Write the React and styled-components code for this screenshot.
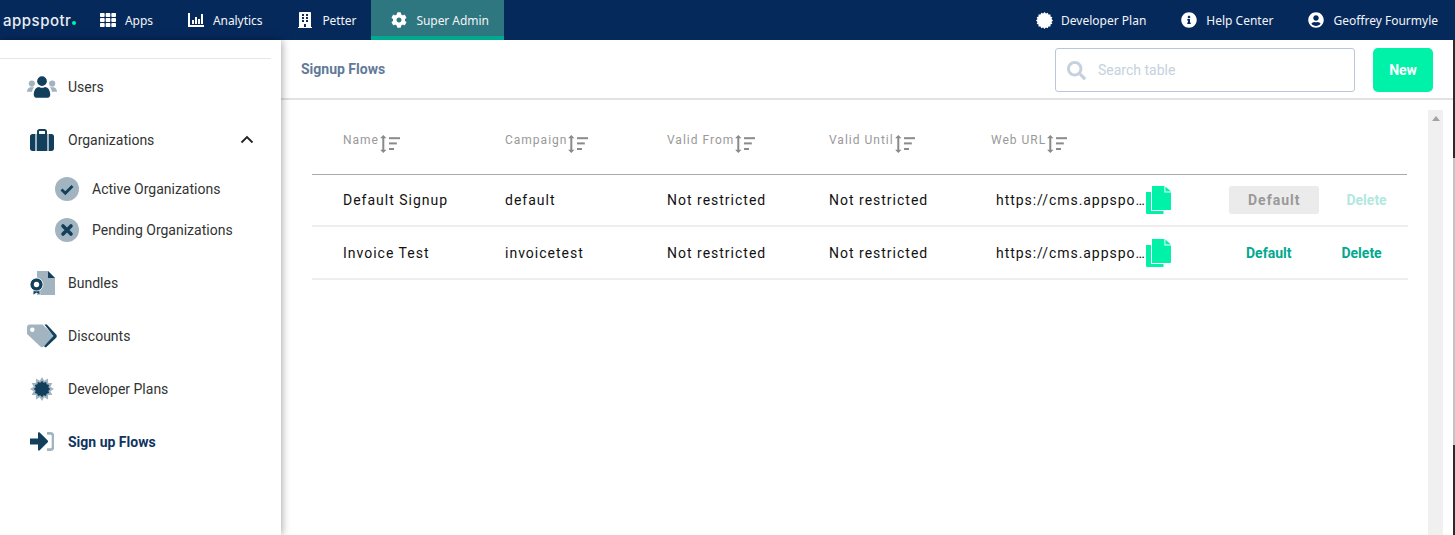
import React from 'react';
import styled, { createGlobalStyle } from 'styled-components';
import { FaTh, FaBuilding, FaCog, FaInfoCircle, FaUserCircle, FaSearch } from 'react-icons/fa';

const DARK = '#123f5c';
const LIGHT = '#a2b4bf';

const Global = createGlobalStyle`
  html, body { margin: 0; padding: 0; height: 100%; background: #fff; overflow: hidden; }
  body { font-family: Roboto, "Liberation Sans", sans-serif; }
  #root { height: 100%; }
  * { box-sizing: border-box; }
`;

const Page = styled.div`
  display: flex;
  flex-direction: column;
  width: 1455px;
  height: 535px;
  overflow: hidden;
`;

const TopBar = styled.header`
  display: flex;
  align-items: stretch;
  height: 40px;
  flex: none;
  background: #06295c;
  color: #fff;
`;

const Logo = styled.div`
  width: 80px;
  padding-left: 3px;
  display: flex;
  align-items: center;
  gap: 1px;
  font-family: Inter, sans-serif;
  font-size: 15px;
  font-weight: 500;
  letter-spacing: 0.5px;
  color: #e9edf3;
`;

const LogoDot = styled.i`
  width: 4px;
  height: 4px;
  margin-top: 5px;
  border-radius: 50%;
  background: #00f2a9;
`;

const NavGroup = styled.div`
  display: flex;
  align-items: stretch;
  letter-spacing: ${p => (p.$tight ? '-0.06px' : '0')};
`;

const NavItem = styled.div`
  display: flex;
  align-items: center;
  padding: 0 15px;
  font-family: "Noto Sans", Roboto, sans-serif;
  font-size: 12px;
  color: #f2f4f7;
  background: ${p => (p.$active ? '#2e7680' : 'transparent')};
  border-bottom: ${p => (p.$active ? '4px solid #00a98f' : '0')};
  padding-top: ${p => (p.$active ? '4px' : '0')};
  &:last-child { padding-right: ${p => (p.$end ? '17px' : '15px')}; }
`;

const NavIcon = styled.span`
  width: 26px;
  margin-right: 4px;
  display: flex;
  justify-content: center;
  align-items: center;
  font-size: 16px;
  color: #fff;
`;

const NavSpacer = styled.div`
  flex: 1;
`;

const Content = styled.div`
  flex: 1;
  display: flex;
  min-height: 0;
`;

const Sidebar = styled.aside`
  width: 281px;
  flex: none;
  padding: 18px 0 0;
  background: #fff;
  box-shadow: 1px 0 8px rgba(0, 0, 0, 0.35);
  position: relative;
  z-index: 1;
`;

const SideList = styled.nav`
  width: 271px;
  padding-top: 1px;
  border-top: 1px solid #e6e6e6;
  display: flex;
  flex-direction: column;
`;

const SideItem = styled.div`
  height: 53px;
  display: flex;
  align-items: center;
  padding-left: 27px;
  font-size: 14px;
  color: ${p => (p.$active ? '#0f3460' : '#333')};
  font-weight: ${p => (p.$active ? 700 : 400)};
`;

const SideIcon = styled.span`
  width: 30px;
  height: 28px;
  margin-right: 11px;
  display: flex;
  align-items: center;
  justify-content: center;
  flex: none;
`;

const Chevron = styled.svg`
  margin-left: auto;
  margin-right: 17px;
`;

const SubList = styled.div`
  display: flex;
  flex-direction: column;
  margin-bottom: 6px;
  margin-top: 2px;
`;

const SubItem = styled.div`
  height: 41px;
  display: flex;
  align-items: center;
  gap: 13px;
  padding-left: 55px;
  font-size: 14px;
  color: #333;
`;

const Main = styled.main`
  flex: 1;
  min-width: 0;
  display: flex;
  flex-direction: column;
`;

const MainHead = styled.div`
  height: 60px;
  flex: none;
  display: flex;
  align-items: center;
  padding: 0 20px;
  border-bottom: 2px solid #e2e2e2;
`;

const Title = styled.h1`
  flex: 1;
  margin: 0;
  font-size: 14px;
  font-weight: 700;
  color: #5f7a99;
`;

const Search = styled.label`
  width: 300px;
  height: 44px;
  display: flex;
  align-items: center;
  gap: 12px;
  padding-left: 11px;
  border: 1px solid #b9c8d9;
  border-radius: 3px;
  color: #c5d1dd;
  font-size: 19px;
  position: relative;
  top: 1px;
`;

const SearchInput = styled.input`
  flex: 1;
  min-width: 0;
  padding: 0;
  border: 0;
  outline: 0;
  background: transparent;
  font: 400 14px Roboto, sans-serif;
  &::placeholder { color: #c5d1dd; opacity: 1; }
`;

const NewButton = styled.button`
  width: 60px;
  height: 44px;
  margin-left: 18px;
  border: 0;
  border-radius: 5px;
  background: #00f2a9;
  color: #fff;
  font: 700 14px Roboto, sans-serif;
  position: relative;
  top: 1px;
`;

const MainBody = styled.div`
  flex: 1;
  min-height: 0;
  display: flex;
`;

const TableArea = styled.div`
  width: 1127px;
  flex: none;
  padding-left: 31px;
`;

const Grid = styled.div`
  display: grid;
  grid-template-columns: 162px 162px 162px 162px 238px 1fr;
  align-items: center;
  padding-left: 31px;
`;

const HeadRow = styled(Grid)`
  height: 75px;
  padding-top: 12px;
  margin-right: 1px;
  border-bottom: 1px solid #aaa;
`;

const BodyRow = styled(Grid)`
  height: ${p => (p.$first ? '52px' : '53px')};
  border-bottom: 2px solid #eee;
  font-size: 14px;
  letter-spacing: 1px;
  color: #111;
`;

const HeadCell = styled.div`
  display: flex;
  align-items: flex-start;
  gap: 1px;
  font-size: 12px;
  letter-spacing: 1px;
  color: #999;
  line-height: 12px;
`;

const UrlCell = styled.div`
  display: flex;
  align-items: center;
  padding-left: 5px;
`;

const UrlText = styled.span`
  width: 150px;
  letter-spacing: 0.95px;
  overflow: hidden;
  text-overflow: ellipsis;
  white-space: nowrap;
`;

const Actions = styled.div`
  display: flex;
  align-items: center;
`;

const DefaultButton = styled.button`
  height: 28px;
  padding: 0 19px;
  margin-left: ${p => (p.disabled ? '0' : '-2px')};
  border: 0;
  border-radius: 3px;
  font: 700 14px Roboto, sans-serif;
  letter-spacing: ${p => (p.disabled ? '1px' : '0')};
  background: ${p => (p.disabled ? '#ebebeb' : 'transparent')};
  color: ${p => (p.disabled ? '#999' : '#00a98f')};
`;

const DeleteButton = styled.button`
  margin-left: ${p => (p.disabled ? '27px' : '31px')};
  padding: 0;
  border: 0;
  background: transparent;
  font: 700 14px Roboto, sans-serif;
  color: ${p => (p.disabled ? '#b2e8df' : '#00a98f')};
`;

const Track = styled.div`
  width: 15px;
  margin: 10px 0 0 20px;
  flex: none;
  background: #f0f0f0;
  display: flex;
  justify-content: center;
  padding-top: 6px;
`;

const TrackArrow = styled.div`
  width: 0;
  height: 0;
  border-left: 4px solid transparent;
  border-right: 4px solid transparent;
  border-bottom: 5px solid #a3a3a3;
`;

const Edge = styled.div`
  width: 2px;
  flex: none;
  display: flex;
  flex-direction: column;
`;

const EdgePart = styled.div`
  flex: ${p => p.$grow} 0 0;
  background: ${p => p.$color};
`;

const burstPoints = (radius, inner, points) => {
  const pts = [];
  for (let i = 0; i < points * 2; i++) {
    const r = (i % 2 ? inner : 1) * radius;
    const a = (Math.PI * i) / points;
    pts.push(`${(12 + r * Math.sin(a)).toFixed(2)},${(12 - r * Math.cos(a)).toFixed(2)}`);
  }
  return pts.join(' ');
};

const PlanIcon = () => (
  <svg width="17" height="17" viewBox="0 0 24 24">
    <polygon points={burstPoints(12, 0.84, 16)} fill="#fff" />
  </svg>
);

const PlansIcon = () => (
  <svg width="24" height="24" viewBox="0 0 24 24">
    <polygon points={burstPoints(12, 0.72, 12)} fill={LIGHT} />
    <polygon points={burstPoints(8.2, 0.8, 12)} fill={DARK} />
  </svg>
);

const AnalyticsIcon = () => (
  <svg width="16" height="14" viewBox="0 0 16 14" fill="#fff">
    <rect x="0" y="0" width="2" height="14" />
    <rect x="0" y="12" width="16" height="2" />
    <rect x="4" y="7" width="2" height="4" />
    <rect x="7" y="4" width="2" height="7" />
    <rect x="10" y="6" width="2" height="5" />
    <rect x="13" y="1" width="2" height="10" />
  </svg>
);

const UsersIcon = () => (
  <svg width="31" height="22" viewBox="0 0 31 22">
    <circle cx="5" cy="7.5" r="3.2" fill={LIGHT} />
    <circle cx="26" cy="7.5" r="3.2" fill={LIGHT} />
    <path d="M0 16c0-3 1.8-4.8 4-4.8h3.5C6 12.6 5.500 14 5.300 16H1.200C.5 16 0 16.200 0 16zM31 16c0-3-1.800-4.800-4-4.800h-3.500c1.500 1.400 2 2.800 2.200 4.800h4.100c.7 0 1.200.2 1.200 0z" fill={LIGHT} />
    <circle cx="15.5" cy="5" r="5" fill={DARK} />
    <path d="M7 19c0-5 2.500-8 5.500-8 1 .6 2 .9 3 .9s2-.3 3-.9c3 0 5.500 3 5.500 8 0 1.800-1 3-2.500 3H9.500C8 22 7 20.800 7 19z" fill={DARK} />
  </svg>
);

const SuitcaseIcon = () => (
  <svg width="24" height="22" viewBox="0 0 24 22">
    <path d="M7 6V2.500C7 1.200 8 0 9.500 0h5C16 0 17 1.200 17 2.500V6h-2V2.500c0-.3-.2-.5-.5-.5h-5c-.3 0-.5.2-.5.500V6z" fill={DARK} />
    <path d="M2.500 5H5v17H2.500C1 22 0 21 0 19.500v-12C0 6 1 5 2.500 5zM7 5h10v17H7zM19 5h2.500C23 5 24 6 24 7.500v12c0 1.500-1 2.500-2.500 2.500H19z" fill={DARK} />
    <path d="M5 5h2v17H5zM17 5h2v17h-2z" fill={LIGHT} />
  </svg>
);

const CheckBadge = () => (
  <svg width="24" height="24" viewBox="0 0 24 24">
    <circle cx="12" cy="12" r="12" fill={LIGHT} />
    <path d="M6.500 12.500l3.800 3.800 7.200-7.300" fill="none" stroke={DARK} strokeWidth="2.800" />
  </svg>
);

const CrossBadge = () => (
  <svg width="24" height="24" viewBox="0 0 24 24">
    <circle cx="12" cy="12" r="12" fill={LIGHT} />
    <path d="M8 8l8 8M16 8l-8 8" fill="none" stroke={DARK} strokeWidth="3.600" strokeLinecap="round" />
  </svg>
);

const BundleIcon = () => (
  <svg width="25" height="24" viewBox="0 0 25 24">
    <path d="M7 0h11l7 7v17H7z" fill={LIGHT} />
    <path d="M18 0l7 7h-7z" fill={DARK} />
    <path d="M3.500 17l-.5 7 3.500-2 3.500 2-.5-7z" fill={DARK} stroke="#fff" strokeWidth="0.600" />
    <circle cx="6.500" cy="13.500" r="6.500" fill={DARK} stroke="#fff" strokeWidth="0.800" />
    <circle cx="6.500" cy="13.500" r="2.700" fill="#fff" />
  </svg>
);

const TagIcon = () => (
  <svg width="31" height="24" viewBox="0 0 31 24">
    <path d="M0 3C0 1.200 1.200 0 3 0h13l10 10c1 1.200 1 2.800 0 4l-8.500 8.700c-1.200 1.200-2.800 1.200-4 0L0 10z" fill={LIGHT} />
    <circle cx="5.500" cy="5.500" r="2.300" fill="#fff" />
    <path d="M18 0h2.500l9.600 10.400c.9 1 .9 2.400 0 3.400L19.500 24l-2-1.500 9.800-10.500z" fill={DARK} />
  </svg>
);

const SignInIcon = () => (
  <svg width="24" height="19" viewBox="0 0 24 19">
    <path d="M17 1.400h3.500C22.300 1.400 23 2.400 23 4v11c0 1.600-.7 2.600-2.500 2.600H17" fill="none" stroke={LIGHT} strokeWidth="2.600" />
    <path d="M0 6.500h8V1.200c0-.9 1-1.400 1.700-.7l8 8c.5.500.5 1.300 0 1.800l-8 8c-.7.700-1.700.2-1.700-.7V12.500H0z" fill={DARK} />
  </svg>
);

const SortIcon = () => (
  <svg width="20" height="18" viewBox="0 0 20 18" fill="#8a8a8a" style={{ marginTop: 1 }}>
    <path d="M3.300 0L6.500 3.200H4.300v11.600h2.200L3.300 18 .1 14.800h2.200V3.200H.1z" />
    <rect x="9" y="2.200" width="11" height="2" />
    <rect x="9" y="7.400" width="7.800" height="2" />
    <rect x="9" y="13" width="5" height="2" />
  </svg>
);

const CopyIcon = () => (
  <svg width="25" height="28" viewBox="0 0 25 28" fill="#00f2a9" style={{ flex: 'none' }}>
    <path d="M0 6h5v19h12.500v3H1.500C.5 28 0 27.500 0 26.500z" />
    <path d="M6 0h12.400v6.600H25V23c0 .6-.4 1-1 1H6z" />
    <path d="M19.400 .4L25 5.600h-5.600z" />
  </svg>
);

const columns = ['Name', 'Campaign', 'Valid From', 'Valid Until', 'Web URL'];

const rows = [
  { name: 'Default Signup', campaign: 'default', current: true },
  { name: 'Invoice Test', campaign: 'invoicetest', current: false },
];

export default function App() {
  return (
    <Page>
      <Global />
      <TopBar>
        <Logo>appspotr<LogoDot /></Logo>
        <NavGroup $tight>
          <NavItem><NavIcon><FaTh /></NavIcon>Apps</NavItem>
          <NavItem><NavIcon><AnalyticsIcon /></NavIcon>Analytics</NavItem>
          <NavItem><NavIcon><FaBuilding /></NavIcon>Petter</NavItem>
          <NavItem $active><NavIcon><FaCog /></NavIcon>Super Admin</NavItem>
        </NavGroup>
        <NavSpacer />
        <NavGroup>
          <NavItem><NavIcon><PlanIcon /></NavIcon>Developer Plan</NavItem>
          <NavItem><NavIcon><FaInfoCircle /></NavIcon>Help Center</NavItem>
          <NavItem $end><NavIcon><FaUserCircle /></NavIcon>Geoffrey Fourmyle</NavItem>
        </NavGroup>
      </TopBar>
      <Content>
        <Sidebar>
          <SideList>
            <SideItem><SideIcon><UsersIcon /></SideIcon>Users</SideItem>
            <SideItem>
              <SideIcon><SuitcaseIcon /></SideIcon>
              Organizations
              <Chevron width="14" height="9" viewBox="0 0 14 9">
                <path d="M1.500 7.500L7 2l5.500 5.500" fill="none" stroke="#222" strokeWidth="1.800" />
              </Chevron>
            </SideItem>
            <SubList>
              <SubItem><CheckBadge />Active Organizations</SubItem>
              <SubItem><CrossBadge />Pending Organizations</SubItem>
            </SubList>
            <SideItem><SideIcon><BundleIcon /></SideIcon>Bundles</SideItem>
            <SideItem><SideIcon><TagIcon /></SideIcon>Discounts</SideItem>
            <SideItem><SideIcon><PlansIcon /></SideIcon>Developer Plans</SideItem>
            <SideItem $active><SideIcon><SignInIcon /></SideIcon>Sign up Flows</SideItem>
          </SideList>
        </Sidebar>
        <Main>
          <MainHead>
            <Title>Signup Flows</Title>
            <Search>
              <FaSearch />
              <SearchInput placeholder="Search table" />
            </Search>
            <NewButton>New</NewButton>
          </MainHead>
          <MainBody>
            <TableArea>
              <HeadRow>
                {columns.map(c => (
                  <HeadCell key={c}>{c}<SortIcon /></HeadCell>
                ))}
              </HeadRow>
              {rows.map((r, i) => (
                <BodyRow key={r.name} $first={i === 0}>
                  <div>{r.name}</div>
                  <div>{r.campaign}</div>
                  <div>Not restricted</div>
                  <div>Not restricted</div>
                  <UrlCell>
                    <UrlText>https://cms.appspotr.com</UrlText>
                    <CopyIcon />
                  </UrlCell>
                  <Actions>
                    <DefaultButton disabled={r.current}>Default</DefaultButton>
                    <DeleteButton disabled={r.current}>Delete</DeleteButton>
                  </Actions>
                </BodyRow>
              ))}
            </TableArea>
            <Track><TrackArrow /></Track>
            <NavSpacer />
          </MainBody>
        </Main>
        <Edge>
          <EdgePart $grow={118} $color="#2b2b2b" />
          <EdgePart $grow={287} $color="#c4c4c4" />
          <EdgePart $grow={90} $color="#2b2b2b" />
        </Edge>
      </Content>
    </Page>
  );
}
